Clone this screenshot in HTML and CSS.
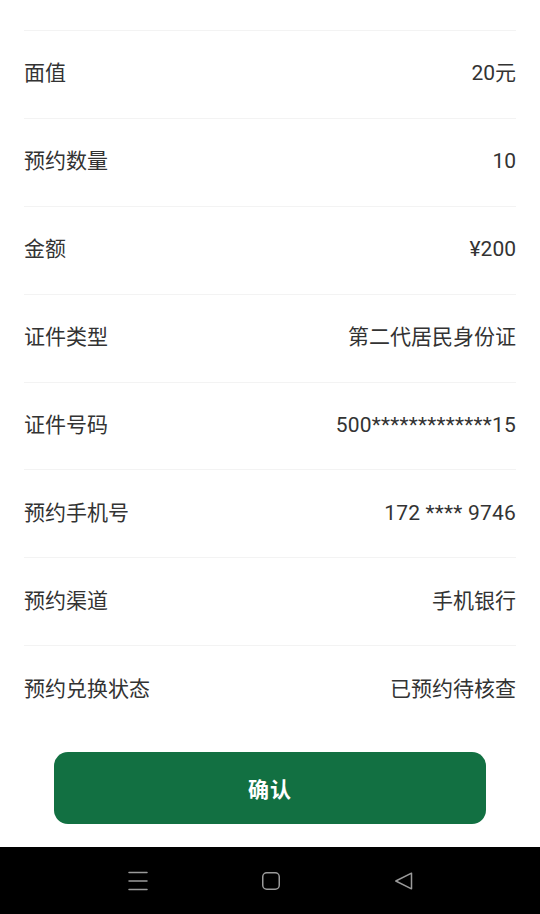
FILE: index.html
```html
<!DOCTYPE html>
<html lang="zh-CN">
<head>
<meta charset="utf-8">
<title>预约详情</title>
<link rel="stylesheet" href="styles.css">
</head>
<body>
<div class="screen">
  <main class="content">
    <div class="top-gap"></div>
    <ul class="list">
      <li class="row"><span class="label">面值</span><span class="value">20元</span></li>
      <li class="row"><span class="label">预约数量</span><span class="value">10</span></li>
      <li class="row"><span class="label">金额</span><span class="value">¥200</span></li>
      <li class="row"><span class="label">证件类型</span><span class="value">第二代居民身份证</span></li>
      <li class="row"><span class="label">证件号码</span><span class="value masked">500*************15</span></li>
      <li class="row"><span class="label">预约手机号</span><span class="value masked">172 **** 9746</span></li>
      <li class="row"><span class="label">预约渠道</span><span class="value">手机银行</span></li>
      <li class="row last"><span class="label">预约兑换状态</span><span class="value">已预约待核查</span></li>
    </ul>
    <div class="actions">
      <button class="confirm" type="button">确认</button>
    </div>
  </main>
  <nav class="navbar">
    <svg class="nav-icon" width="20" height="20" viewBox="0 0 20 20" fill="none" stroke="#9a9a9a" stroke-width="1.5" stroke-linecap="round">
      <path d="M1 1.5h18M1 10h18M1 18.5h18"/>
    </svg>
    <svg class="nav-icon" width="20" height="20" viewBox="0 0 20 20" fill="none" stroke="#9a9a9a" stroke-width="1.5">
      <rect x="1.75" y="1.75" width="16.5" height="16.5" rx="4"/>
    </svg>
    <svg class="nav-icon" width="20" height="20" viewBox="0 0 20 20" fill="none" stroke="#9a9a9a" stroke-width="1.5" stroke-linejoin="round">
      <path d="M17.5 2.2v15.6L1.8 10z"/>
    </svg>
  </nav>
</div>
</body>
</html>
```
FILE: styles.css
```css
* { box-sizing: border-box; }
html, body { margin: 0; padding: 0; }
body {
  background: #ffffff;
  font-family: Roboto, "Noto Sans CJK SC", "Noto Sans", sans-serif;
  color: #333333;
}
.screen {
  width: 540px;
  height: 914px;
  display: flex;
  flex-direction: column;
  overflow: hidden;
}
.content {
  flex: 1;
  display: flex;
  flex-direction: column;
}
.top-gap {
  height: 31px;
  margin: 0 24px;
  border-bottom: 1px solid #f3f3f3;
}
.list {
  list-style: none;
  margin: 0 24px;
  padding: 0;
}
.row {
  height: 87.875px;
  display: flex;
  align-items: center;
  justify-content: space-between;
  border-bottom: 1px solid #f3f3f3;
  font-size: 21px;
  line-height: 1;
  padding-bottom: 1px;
}
.row.last { border-bottom: none; }
.label { color: #333333; }
.value { color: #333333; }
.value.masked { letter-spacing: 0.2px; }
.actions {
  padding: 18px 54px 0;
}
.confirm {
  display: block;
  width: 100%;
  height: 72px;
  border: none;
  border-radius: 14px;
  background: #127042;
  color: #ffffff;
  font-family: "Noto Sans CJK SC", sans-serif;
  font-size: 21px;
  font-weight: 700;
  letter-spacing: 1px;
  padding-bottom: 2px;
}
.navbar {
  height: 67px;
  background: #000000;
  display: flex;
  align-items: center;
  justify-content: center;
  gap: 113px;
  padding-left: 2px;
}
.nav-icon { display: block; }
```
